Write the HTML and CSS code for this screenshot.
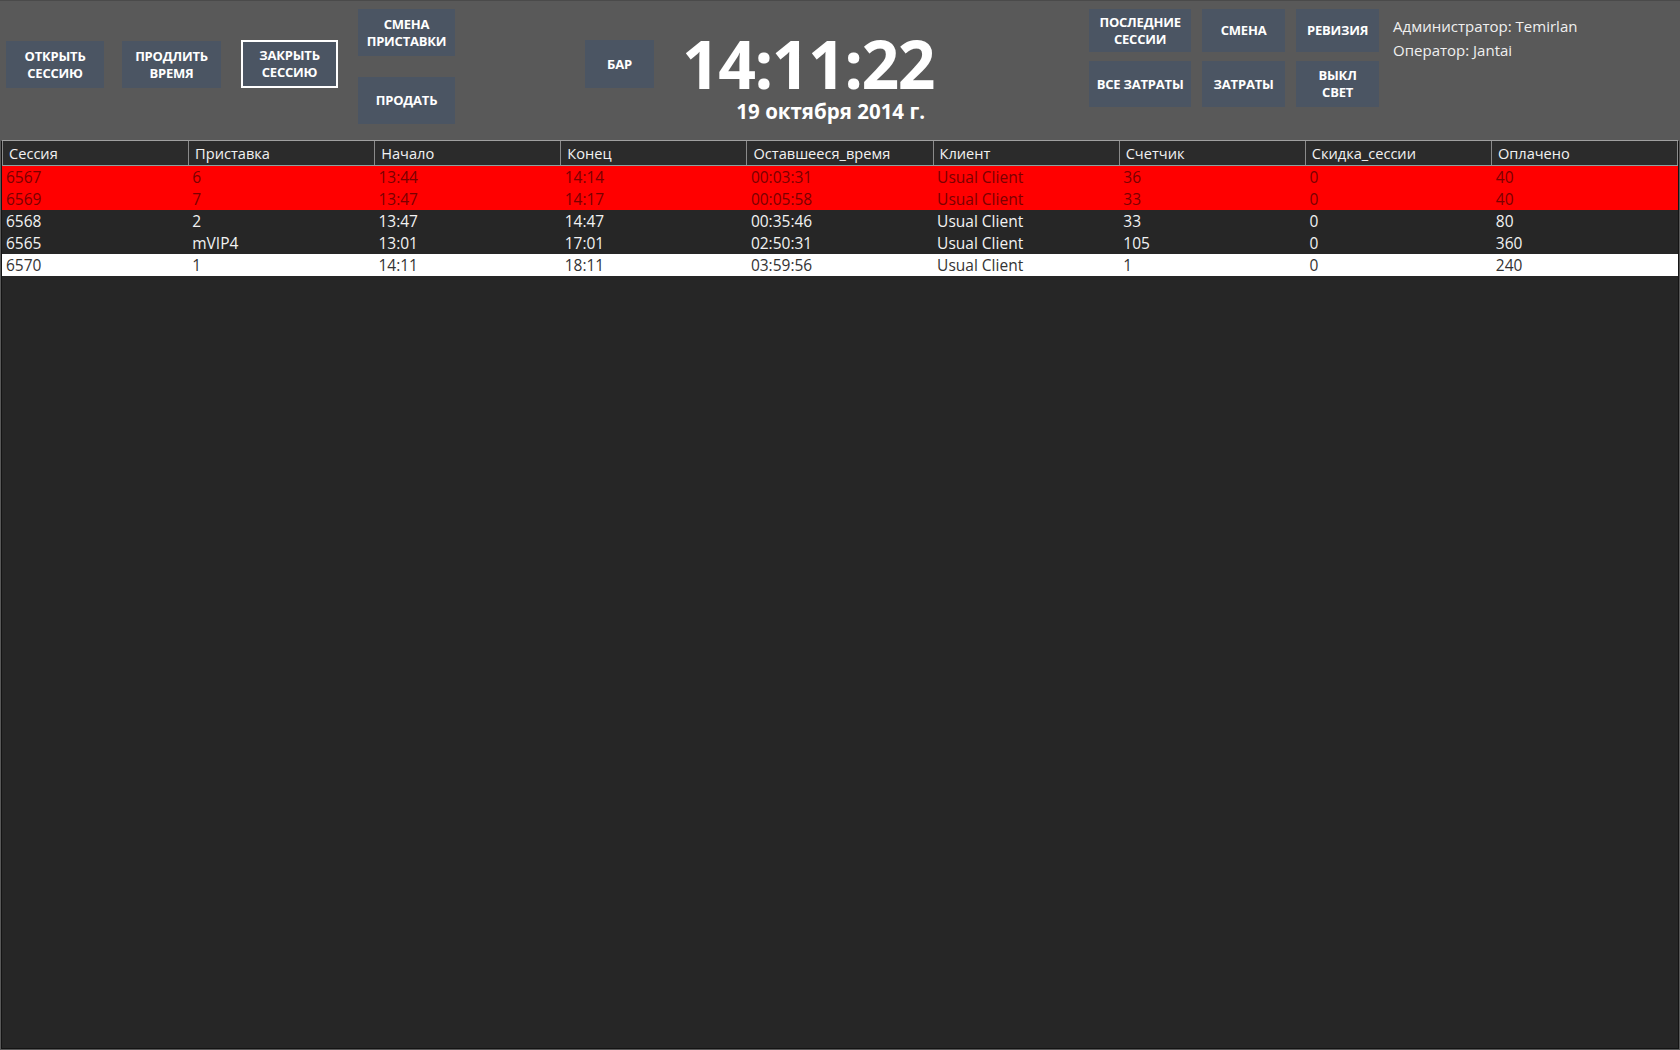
FILE: index.html
```html
<!DOCTYPE html>
<html lang="ru">
<head>
<meta charset="utf-8">
<title>Сессии</title>
<link rel="stylesheet" href="styles.css">
</head>
<body>
<div class="app">
  <header class="topbar">
    <button class="btn btn-open">ОТКРЫТЬ<br>СЕССИЮ</button>
    <button class="btn btn-extend">ПРОДЛИТЬ<br>ВРЕМЯ</button>
    <button class="btn btn-close">ЗАКРЫТЬ<br>СЕССИЮ</button>
    <div class="stack">
      <button class="btn btn-stack">СМЕНА<br>ПРИСТАВКИ</button>
      <button class="btn btn-stack btn-sell">ПРОДАТЬ</button>
    </div>
    <button class="btn btn-bar">БАР</button>
    <div class="clock">
      <div class="time">14:11:22</div>
      <div class="date">19 октября 2014 г.</div>
    </div>
    <div class="rgrid">
      <button class="btn r1 c1">ПОСЛЕДНИЕ<br>СЕССИИ</button>
      <button class="btn r1 c2">СМЕНА</button>
      <button class="btn r1 c3">РЕВИЗИЯ</button>
      <button class="btn r2 c1">ВСЕ ЗАТРАТЫ</button>
      <button class="btn r2 c2">ЗАТРАТЫ</button>
      <button class="btn r2 c3">ВЫКЛ<br>СВЕТ</button>
    </div>
    <div class="users">
      <div>Администратор: Temirlan</div>
      <div>Оператор: Jantai</div>
    </div>
  </header>
  <main class="grid">
    <div class="row head">
      <div class="cell">Сессия</div>
      <div class="cell">Приставка</div>
      <div class="cell">Начало</div>
      <div class="cell">Конец</div>
      <div class="cell">Оставшееся_время</div>
      <div class="cell">Клиент</div>
      <div class="cell">Счетчик</div>
      <div class="cell">Скидка_сессии</div>
      <div class="cell">Оплачено</div>
    </div>
    <div class="row red">
      <div class="cell">6567</div><div class="cell">6</div><div class="cell">13:44</div><div class="cell">14:14</div><div class="cell">00:03:31</div><div class="cell">Usual Client</div><div class="cell">36</div><div class="cell">0</div><div class="cell">40</div>
    </div>
    <div class="row red">
      <div class="cell">6569</div><div class="cell">7</div><div class="cell">13:47</div><div class="cell">14:17</div><div class="cell">00:05:58</div><div class="cell">Usual Client</div><div class="cell">33</div><div class="cell">0</div><div class="cell">40</div>
    </div>
    <div class="row dark">
      <div class="cell">6568</div><div class="cell">2</div><div class="cell">13:47</div><div class="cell">14:47</div><div class="cell">00:35:46</div><div class="cell">Usual Client</div><div class="cell">33</div><div class="cell">0</div><div class="cell">80</div>
    </div>
    <div class="row dark">
      <div class="cell">6565</div><div class="cell">mVIP4</div><div class="cell">13:01</div><div class="cell">17:01</div><div class="cell">02:50:31</div><div class="cell">Usual Client</div><div class="cell">105</div><div class="cell">0</div><div class="cell">360</div>
    </div>
    <div class="row white">
      <div class="cell">6570</div><div class="cell">1</div><div class="cell">14:11</div><div class="cell">18:11</div><div class="cell">03:59:56</div><div class="cell">Usual Client</div><div class="cell">1</div><div class="cell">0</div><div class="cell">240</div>
    </div>
  </main>
</div>
</body>
</html>
```

FILE: styles.css
```css
* { box-sizing: border-box; }
html, body {
  margin: 0;
  padding: 0;
  width: 1680px;
  height: 1050px;
  overflow: hidden;
  background: #595959;
  font-family: "Open Sans", "Noto Sans", sans-serif;
}
.app {
  display: flex;
  flex-direction: column;
  height: 1050px;
}
.topbar {
  height: 140px;
  flex: none;
  display: flex;
  align-items: flex-start;
  padding-left: 6px;
  border-top: 1px solid #4a4a4a;
}
.btn {
  font-family: "Open Sans", "Noto Sans", sans-serif;
  font-weight: 700;
  font-size: 13px;
  line-height: 17px;
  color: #ffffff;
  background: #4b5563;
  border: none;
  padding: 0;
  margin: 0;
  text-align: center;
  letter-spacing: -0.2px;
}
.btn-open { width: 98px; height: 47px; margin-top: 40px; }
.btn-extend { width: 99px; height: 47px; margin-top: 40px; margin-left: 18px; }
.btn-close { width: 97px; height: 48px; margin-top: 39px; margin-left: 20px; border: 2px solid #ffffff; }
.stack {
  display: flex;
  flex-direction: column;
  gap: 21px;
  margin-left: 20px;
  margin-top: 8px;
}
.btn-stack { width: 97px; height: 47px; }
.btn-bar { width: 69px; height: 48px; margin-top: 39px; margin-left: 130px; }
.clock {
  display: flex;
  flex-direction: column;
  align-items: flex-end;
  margin-left: 28px;
  margin-top: 29px;
  color: #ffffff;
}
.time {
  font-size: 66px;
  font-weight: 700;
  line-height: 66px;
  letter-spacing: -1.5px;
}
.date {
  font-size: 20.5px;
  font-weight: 700;
  line-height: 21px;
  margin-top: 5px;
  padding-right: 9px;
}
.rgrid {
  display: grid;
  grid-template-columns: 102px 83px 83px;
  grid-template-rows: 43px 46px;
  column-gap: 11px;
  row-gap: 9px;
  margin-left: 155px;
  margin-top: 8px;
}
.users {
  margin-left: 14px;
  margin-top: 13px;
  color: #f0f0f0;
  font-size: 15px;
  line-height: 24px;
}
.grid {
  flex: 1;
  margin: 0 1px 1px 1px;
  background: #262626;
  border: 1px solid #141414;
  border-top: 1px solid #a0a0a0;
  display: flex;
  flex-direction: column;
}
.row {
  display: grid;
  grid-template-columns: repeat(9, 1fr);
  height: 22px;
  align-items: center;
  font-size: 15.5px;
  line-height: 23px;
}
.row .cell {
  padding-left: 4px;
  white-space: nowrap;
  overflow: hidden;
  height: 100%;
}
.head {
  height: 25px;
  background: #2b2b2b;
  color: #f2f2f2;
  font-size: 14.6px;
  border-bottom: 1px solid #8fa0a0;
  border-left: 1px solid #8a8a8a;
}
.head .cell {
  padding-left: 6px;
  line-height: 25px;
  border-right: 1px solid #8a8a8a;
}
.red { background: #ff0000; color: #7a0000; }
.dark { background: #262626; color: #f2f2f2; }
.white { background: #ffffff; color: #333333; }
```
